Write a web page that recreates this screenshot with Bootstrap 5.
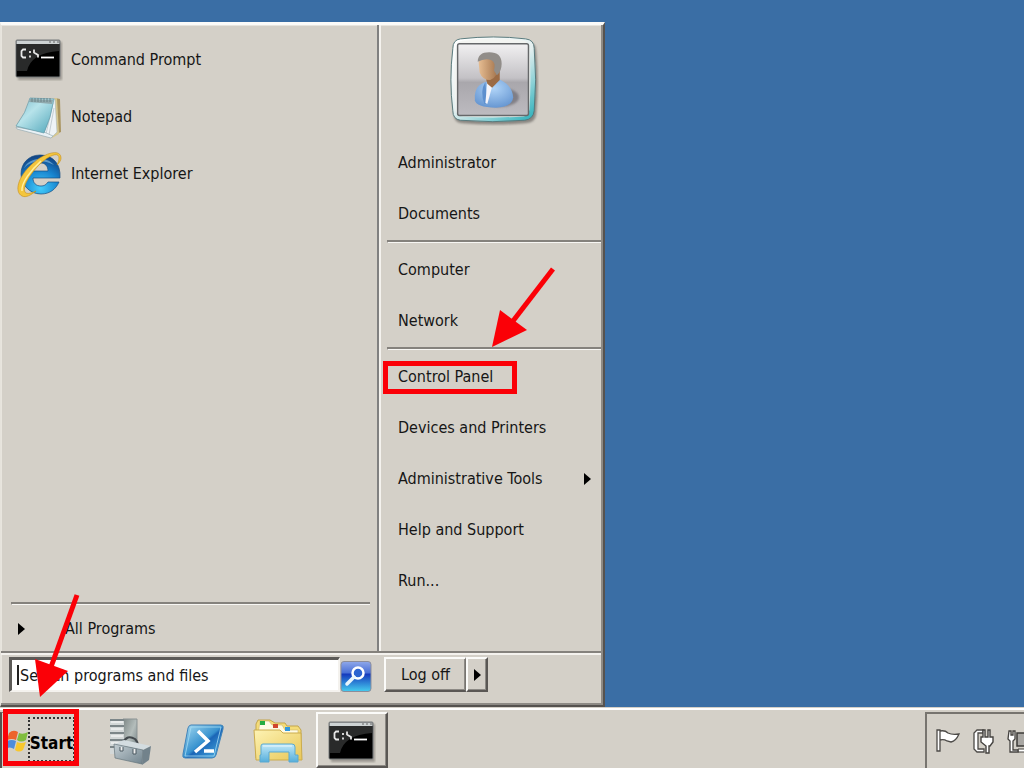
<!DOCTYPE html>
<html lang="en">
<head>
<meta charset="utf-8">
<meta name="viewport" content="width=device-width, initial-scale=1">
<title>Start menu</title>
<link href="https://cdn.jsdelivr.net/npm/bootstrap@5.3.0/dist/css/bootstrap.min.css" rel="stylesheet">
<script src="https://cdn.jsdelivr.net/npm/bootstrap@5.3.0/dist/js/bootstrap.bundle.min.js" defer></script>
<style>
  :root { --face: #d4d0c8; --shade: #808080; --edge: #55524f; --lite: #fbfbf9; --mark: #fb0007; }
  body { background: #3a6ea5; color: #161616; font: 16px/24px "DejaVu Sans Condensed", Tahoma, sans-serif; overflow-x: hidden; }
  a { color: inherit; text-decoration: none; }
  svg { display: block; flex: none; }
  .start-menu { width: 605px; max-width: 100%; background: var(--face); border: solid; border-width: 3px 2px 2px 1px; border-color: var(--lite) var(--edge) var(--edge) #e6e3dc; box-shadow: inset -2px -2px #8d8a85, inset 1px 1px #e8e5de; }
  .programs { width: 378px; padding-top: 6px; border-right: 2px solid var(--shade); box-shadow: 2px 0 #f4f2ee; }
  .program { height: 57px; padding-left: 14px; gap: 8px; }
  .program-icon { width: 48px; }
  .rule { height: 3px; margin: 1px 0; border-top: 2px solid #85827d; border-bottom: 1px solid #f8f7f4; border-left: 1px solid #85827d; }
  .programs .rule { margin: 1px 7px 1px 10px; }
  .all-programs { height: 45px; padding-left: 16px; gap: 40px; }
  .places { padding: 11px 2px 45px 8px; }
  .avatar { margin-bottom: 11px; }
  .place { height: 51px; padding-left: 11px; padding-right: 10px; }
  .menu-foot { margin-right: 2px; border-top: 2px solid #85827d; box-shadow: inset 0 2px #f4f2ee; padding: 4px 8px 12px; }
  .search-wrap { width: 331px; }
  .search-box, .search-box:focus { height: 35px; border: solid; border-width: 3px 2px 2px 3px; border-color: #5c5a57 #f4f2ee #f4f2ee #5c5a57; border-radius: 0; background: #fff; box-shadow: none; padding: 0 8px; font: inherit; color: #161616; }
  .search-box::placeholder { color: #161616; opacity: 1; }
  .caret { left: 8px; top: 8px; width: 2px; height: 20px; background: #222; }
  .raised { background: var(--face); border: 2px solid; border-color: var(--lite) #5a5754 #5a5754 var(--lite); box-shadow: inset -1px -1px #8d8a85; color: inherit; padding: 0; }
  .plain { background: none; border: 0; padding: 0; }
  .log-off { width: 82px; height: 35px; border-right: 1px solid #77746f; }
  .log-more { width: 22px; height: 35px; }
  .taskbar { height: 61px; background: var(--face); border-top: 1px solid var(--face); box-shadow: inset 0 2px #fff; padding-top: 4px; }
  .start-btn { width: 78px; border-top: 1px solid #77746f; border-left: 2px solid var(--edge); padding-left: 3px; }
  .caption { width: 45px; height: 43px; padding-top: 13px; margin-bottom: 2px; outline: 2px dotted #333; outline-offset: -1px; font-size: 17px; font-weight: 700; color: #000; }
  .mark-start { left: 3px; top: 1px; width: 76px; height: 57px; border: 5px solid var(--mark); pointer-events: none; }
  .arrow-start { left: 34px; bottom: 69px; pointer-events: none; }
  .mark-panel { left: -4px; top: 10px; width: 134px; height: 33px; border: 5px solid var(--mark); pointer-events: none; }
  .arrow-panel { left: 104px; bottom: 54px; pointer-events: none; }
  .quick { gap: 28px; padding-left: 29px; padding-top: 3px; }
  .task { width: 72px; margin-left: 13px; padding-top: 4px; }
  .tray { width: 99px; border: solid #77746f; border-width: 2px 0 0 2px; gap: 10px; padding-left: 8px; overflow: hidden; }
</style>
</head>
<body class="min-vh-100 d-flex flex-column">
<svg width="0" height="0" class="position-absolute" aria-hidden="true">
  <defs>
    <linearGradient id="g-note" x1="0" y1="0" x2="1" y2="1"><stop offset="0" stop-color="#79b9ca"/><stop offset=".4" stop-color="#b7e3ea"/><stop offset="1" stop-color="#4ea5b9"/></linearGradient>
    <radialGradient id="g-ie" cx=".5" cy=".85" r=".85"><stop offset="0" stop-color="#44cdfb"/><stop offset=".55" stop-color="#1784cf"/><stop offset="1" stop-color="#13407f"/></radialGradient>
    <linearGradient id="g-frame" x1=".1" y1="0" x2=".9" y2="1"><stop offset="0" stop-color="#fff"/><stop offset=".5" stop-color="#e4efef"/><stop offset="1" stop-color="#35b3bd"/></linearGradient>
    <linearGradient id="g-photo" x1="0" y1="0" x2="0" y2="1"><stop offset="0" stop-color="#f2f1f2"/><stop offset=".48" stop-color="#c3c1c5"/><stop offset=".54" stop-color="#a9a7ac"/><stop offset="1" stop-color="#bdbbc0"/></linearGradient>
    <linearGradient id="g-face" x1="0" y1="0" x2="1" y2="0"><stop offset="0" stop-color="#e6bd92"/><stop offset="1" stop-color="#9c6c45"/></linearGradient>
    <radialGradient id="g-shirt" cx=".5" cy=".3" r=".7"><stop offset="0" stop-color="#b0d4f8"/><stop offset="1" stop-color="#6797d2"/></radialGradient>
    <linearGradient id="g-find" x1="0" y1="0" x2="0" y2="1"><stop offset="0" stop-color="#8fa8ea"/><stop offset=".38" stop-color="#496fd6"/><stop offset=".42" stop-color="#1539bd"/><stop offset="1" stop-color="#45cdee"/></linearGradient>
    <linearGradient id="g-tower" x1="0" y1="0" x2="1" y2="1"><stop offset="0" stop-color="#7d8786"/><stop offset=".5" stop-color="#b4bdbb"/><stop offset="1" stop-color="#69777b"/></linearGradient>
    <linearGradient id="g-case" x1="0" y1="0" x2="1" y2="1"><stop offset="0" stop-color="#c3ced3"/><stop offset="1" stop-color="#71838d"/></linearGradient>
    <linearGradient id="g-ps" x1="0" y1="0" x2="1" y2="1"><stop offset="0" stop-color="#a8dcf1"/><stop offset=".5" stop-color="#3792cf"/><stop offset=".55" stop-color="#1b66b7"/><stop offset="1" stop-color="#4eb3e4"/></linearGradient>
    <linearGradient id="g-folder" x1="0" y1="0" x2="1" y2="1"><stop offset="0" stop-color="#fdf3b4"/><stop offset="1" stop-color="#e9c757"/></linearGradient>
    <linearGradient id="g-rack" x1="0" y1="0" x2="0" y2="1"><stop offset="0" stop-color="#c2e9f8"/><stop offset="1" stop-color="#55aedb"/></linearGradient>
    <filter id="soft" x="-20%" y="-20%" width="140%" height="140%"><feGaussianBlur stdDeviation="1"/></filter>
    <symbol id="i-cmd" viewBox="0 0 48 42">
      <rect x="3" y="3" width="44" height="38" fill="#77736d" opacity=".6" filter="url(#soft)"/>
      <rect x="1" y="1" width="44" height="37" rx="1" fill="#000" stroke="#777b7c"/>
      <path d="M2 5H44V12Q16 14 12 32H2Z" fill="#3f4141" opacity=".65"/>
      <path d="M1.500 1.500h43v3.500h-43z" fill="#cdd2d3"/><path d="M34 3h2m2 0h2m2 0h2" stroke="#666"/>
      <path d="M11 10.500H8L6.500 12v5L8 18.500H11M15 12v2m0 2.500v2M19 10.500v3l4 2.500v2.500" fill="none" stroke="#e6e6e6" stroke-width="1.800"/><path d="M26 18.500h13" stroke="#fff" stroke-width="1.800"/>
    </symbol>
  </defs>
</svg>

<main class="flex-grow-1 d-flex align-items-end">
  <section class="start-menu" aria-label="Start menu">
    <div class="d-flex">
      <nav class="programs d-flex flex-column" aria-label="Programs">
        <a href="#" class="program d-flex align-items-center"><svg class="program-icon" height="42"><use href="#i-cmd"/></svg><span>Command Prompt</span></a>
        <a href="#" class="program d-flex align-items-center">
          <svg class="program-icon" height="46" viewBox="0 0 48 46">
            <path d="M40 4l5 1 1 33-7 3z" fill="#aa9561"/><path d="M39 4l3 0 2 36-7 4z" fill="#d6c78f"/>
            <path d="M37 5L29 40 36 44 42 38 40 5z" fill="#eef3f6" stroke="#a9b7bc" stroke-width=".6"/>
            <path d="M38 9l-7 31M39 14l-5 27" stroke="#c5ced3" fill="none"/>
            <path d="M1 33L2 35 36 44 38 42 29 38Z" fill="#e9f1f5" stroke="#8ca2aa" stroke-width=".6"/>
            <path d="M15 4L39 5Q36 24 29 39L1 32Q11 19 15 4Z" fill="url(#g-note)" stroke="#649ba9" stroke-width=".7"/>
            <path d="M15 5l23 1-1 4-23-2z" fill="#8fa8ac"/><path d="M17 4v4m3-4v4m3-4v4m3-4v4m3-4v4m3-4v4m3-4v4" stroke="#6b8286" stroke-width="1"/>
          </svg><span>Notepad</span></a>
        <a href="#" class="program d-flex align-items-center">
          <svg class="program-icon" height="48" viewBox="0 0 48 48">
            <path fill-rule="evenodd" d="M25 5C13 5 6 14 6 24s8 20 20 20c9 0 15-5 18-12H33c-2 3-4 4-7 4-5 0-8-3-8-8h27C46 14 38 5 25 5ZM18 21c1-5 4-8 8-8s7 3 7 8Z" fill="url(#g-ie)" stroke="#164d83" stroke-width=".7"/>
            <path d="M9 18C14 8 30 5 39 15 29 9 16 10 9 18Z" fill="#9ad0ef" opacity=".55"/>
            <path d="M46 8C46-2 28 3 16 15 3 27-1 42 7 46c4 2 9-1 14-5-6 3-10 3-11 1C7 36 16 23 25 14 33 6 44 1 44 8c0 3-1 5-2 7 3-3 4-5 4-7Z" fill="#f4c63d" stroke="#c48c1b" stroke-width=".6"/>
            <path d="M7 41C6 33 16 20 26 11" stroke="#fff0a0" stroke-width="1.500" fill="none"/>
          </svg><span>Internet Explorer</span></a>
        <div class="mt-auto">
          <div class="rule"></div>
          <a href="#" class="all-programs d-flex align-items-center"><svg width="8" height="12"><path d="M1 0l7 6-7 6z"/></svg><span>All Programs</span></a>
        </div>
      </nav>
      <nav class="places flex-grow-1" aria-label="Places">
        <div class="avatar d-flex justify-content-center">
          <svg width="90" height="90" viewBox="0 0 94 94">
            <path d="M14 6Q47 3 81 6 91 6 91 16 94 49 91 82 90 91 80 91 47 94 14 91 5 91 5 81 1 49 5 16 5 7 14 6Z" fill="#625f5c" opacity=".65" filter="url(#soft)"/>
            <path d="M12 3Q47-1 80 3 89 4 89 13 92 46 89 78 88 87 79 88 46 91 12 88 4 87 4 78 0 46 4 13 4 4 12 3Z" fill="url(#g-frame)" stroke="#55777a"/>
            <path d="M14 5Q46 1 78 5 83 6 84 13 86 46 84 77 83 83 78 84 46 86 14 84 7 83 7 77 4 46 7 13 8 6 14 5Z" fill="#f3f4f1" opacity=".9"/>
            <rect x="9" y="8" width="74" height="75" rx="2" fill="url(#g-photo)" stroke="#66686a" stroke-width="1.500"/>
            <g filter="url(#soft)"><ellipse cx="54" cy="64" rx="19" ry="10" fill="#65646d" opacity=".65"/></g>
            <path d="M27 62Q28 49 43 47L54 46Q66 52 67 64 66 74 49 75 28 74 27 67Z" fill="url(#g-shirt)"/>
            <path d="M38 48L40 71 37 71Q32 57 38 48Z" fill="#5d8fce"/><path d="M40 48l7-2-7 25-2-1z" fill="#f4f4fa"/>
            <path d="M38 42l15-6 0 10-8 8-5-4z" fill="#9b6b45"/>
            <path d="M31 28Q32 17 42 18 53 19 53 30 52 42 43 46 35 46 32 38Z" fill="url(#g-face)"/>
            <path d="M30 27Q30 17 42 17 55 17 55 29 55 37 50 41L47 36Q49 27 44 25 37 23 30 27Z" fill="#918d89"/>
          </svg>
        </div>
        <a href="#" class="place d-flex align-items-center">Administrator</a>
        <a href="#" class="place d-flex align-items-center">Documents</a>
        <div class="rule"></div>
        <a href="#" class="place d-flex align-items-center">Computer</a>
        <a href="#" class="place d-flex align-items-center">Network</a>
        <div class="rule"></div>
        <div class="position-relative">
          <a href="#" class="place d-flex align-items-center">Control Panel</a>
          <span class="mark-panel position-absolute"></span>
          <svg class="arrow-panel position-absolute" width="66" height="82" viewBox="0 0 66 82"><path d="M62 3L22 55" stroke="#fb0007" stroke-width="5"/><path d="M1 81L9 44 36 64Z" fill="#fb0007"/></svg>
        </div>
        <a href="#" class="place d-flex align-items-center">Devices and Printers</a>
        <a href="#" class="place d-flex align-items-center justify-content-between">Administrative Tools<svg width="7" height="12"><path d="M0 0l7 6-7 6z"/></svg></a>
        <a href="#" class="place d-flex align-items-center">Help and Support</a>
        <a href="#" class="place d-flex align-items-center">Run...</a>
      </nav>
    </div>
    <form class="menu-foot d-flex align-items-start">
      <div class="search-wrap position-relative">
        <input type="search" class="search-box form-control" placeholder="Search programs and files" aria-label="Search programs and files">
        <span class="caret position-absolute"></span>
      </div>
      <button type="button" class="plain mt-1" aria-label="Search">
        <svg width="32" height="32" viewBox="0 0 32 32"><rect x="1" y="0.500" width="30" height="30" rx="3" fill="url(#g-find)" stroke="#8c8d9a"/><circle cx="18" cy="12" r="5.500" fill="#2b63d0" stroke="#fff" stroke-width="2.500"/><path d="M14 16L7 23" stroke="#e9f5fc" stroke-width="3.500" stroke-linecap="round"/></svg>
      </button>
      <div class="d-flex ms-2 ps-1">
        <button type="button" class="raised log-off">Log off</button>
        <button type="button" class="raised log-more d-flex align-items-center justify-content-center" aria-label="More options"><svg width="7" height="12"><path d="M0 0l7 6-7 6z"/></svg></button>
      </div>
    </form>
  </section>
</main>

<footer class="taskbar d-flex position-relative">
  <button type="button" class="plain start-btn d-flex align-items-center">
    <svg width="24" height="26" viewBox="0 0 24 26">
      <path d="M4 5Q8 1 13 4L11 12Q7 10 2 12Z" fill="#ed642b"/><path d="M14 5Q18 7 23 4L21 12Q16 15 12 12Z" fill="#80bd3d"/>
      <path d="M2 13Q7 11 11 13L9 21Q5 18 0 21Z" fill="#4e8cdc"/><path d="M12 14Q16 16 21 14L18 22Q14 25 10 22Z" fill="#f8c72e"/>
    </svg>
    <span class="caption">Start</span>
  </button>
  <span class="mark-start position-absolute"></span>
  <svg class="arrow-start position-absolute" width="48" height="106" viewBox="0 0 48 106"><path d="M43 2L17 74" stroke="#fb0007" stroke-width="5"/><path d="M6 104L1 66 34 78Z" fill="#fb0007"/></svg>
  <div class="quick d-flex align-items-center">
    <button type="button" class="plain" aria-label="Server Manager">
      <svg width="46" height="50" viewBox="0 0 46 50">
        <path d="M16 2h14v35H16z" fill="url(#g-tower)" stroke="#8b9394"/><path d="M3 2h14v35H3z" fill="#d3d8d8"/>
        <path d="M3 3h14M3 9h14M3 16h14M3 23h14M3 30h12" stroke="#7c8689" stroke-width="2"/><path d="M4 5h12M4 12h12M4 19h12M4 26h12" stroke="#fff"/>
        <path d="M16 26Q20 17 28 22q3 3 3 7" fill="none" stroke="#43494d" stroke-width="2"/>
        <path d="M8 27l9-4 27 6-8 4z" fill="#d3dce0"/><path d="M7 27l29 6-1 14-27-6z" fill="url(#g-case)" stroke="#65757d" stroke-width=".7"/><path d="M36 33l8-4-2 14-7 5z" fill="#72828b"/>
        <path d="M13 30v4h3v-4M26 32v5h3v-5" stroke="#4b5960" fill="#eee"/>
      </svg>
    </button>
    <button type="button" class="plain" aria-label="PowerShell">
      <svg width="44" height="44" viewBox="0 0 44 44"><path d="M10 5H40Q43 5 42 9L35 35Q34 38 31 38H4Q1 38 2 34L7 8Q8 5 10 5Z" fill="url(#g-ps)" stroke="#4283b8"/><path d="M10 7H40L33 36H4Z" fill="none" stroke="#a5dbf3" opacity=".8"/><path d="M17 11l10 10-13 11M23 31h10" fill="none" stroke="#fff" stroke-width="3.500"/></svg>
    </button>
    <button type="button" class="plain" aria-label="Windows Explorer">
      <svg width="50" height="48" viewBox="0 0 50 48">
        <path d="M3 6l2-4h12l5 3h10l2 3h11l3 4v28H3z" fill="#f4dc78" stroke="#c2a54c"/>
        <path d="M7 3h9l3 4h10l3 5h13v5H5z" fill="#fffbe4" stroke="#cdb76c" stroke-width=".6"/>
        <path d="M7 3h5v4H7z" fill="#26ad42"/><path d="M20 6h5v4h-5z" fill="#d0452c"/><path d="M32 9h5v4h-5z" fill="#3198df"/>
        <path d="M1 12h26l3 3h18l1 27H3z" fill="url(#g-folder)" stroke="#cbac4e"/>
        <path d="M8 28q0-2 2-2h29q3 0 3 3v8h3v7h-9V34H16v10H7v-7h1z" fill="url(#g-rack)" stroke="#5aa9d1"/><path d="M10 28h29" stroke="#fff" opacity=".7"/>
      </svg>
    </button>
  </div>
  <button type="button" class="raised task d-flex align-items-center justify-content-center" aria-label="Command Prompt"><svg width="48" height="42"><use href="#i-cmd"/></svg></button>
  <div class="tray d-flex align-items-center ms-auto">
    <svg width="26" height="28" viewBox="0 0 26 28"><path d="M2 3h3v21H2zM5 4q5-1 8 2 4 2 11 1-3 7-8 8l-4-1q-3-2-7-1z" fill="#fff" stroke="#4c4a47" stroke-width="1.300"/></svg>
    <svg width="26" height="28" viewBox="0 0 26 28"><path d="M12 3H6L3 6v16l3 3h7v-3H7V6h5z" fill="#fff" stroke="#4c4a47" stroke-width="1.300"/><path d="M12 3h2v7h3V3h2v7h3v5l-3 4h-1v7h-3v-7l-5-4v-5h2z" fill="#fff" stroke="#44423f" stroke-width="1.400"/></svg>
    <svg width="28" height="28" viewBox="0 0 28 28"><path d="M10 6h18v13H10z" fill="#a9a7a3" stroke="#3d3b38" stroke-width="1.500"/><path d="M11 22h17v3H11z" fill="#fff" stroke="#44423f"/><path d="M2 4h2v4h2V4h2v8L6 14v9h5v2H3V14L1 12z" fill="#fff" stroke="#44423f" stroke-width="1.300"/></svg>
  </div>
</footer>
</body>
</html>
